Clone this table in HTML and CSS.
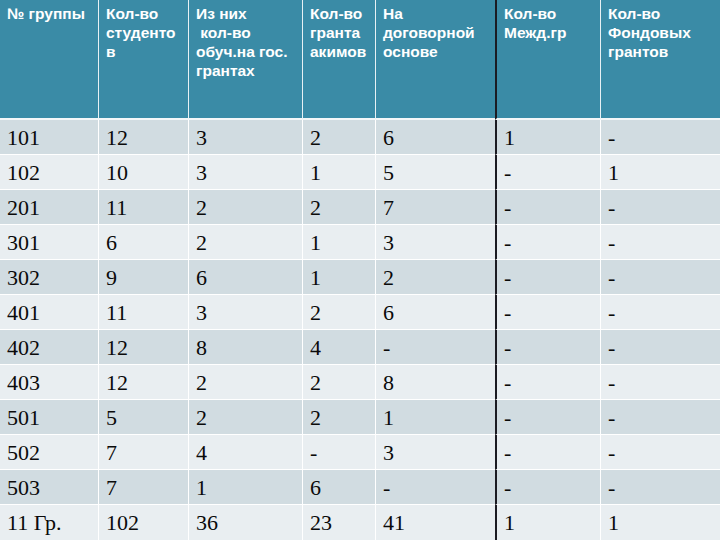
FILE: index.html
```html
<!DOCTYPE html>
<html lang="ru">
<head>
<meta charset="utf-8">
<link rel="stylesheet" href="styles.css">
</head>
<body>
<table class="grid">
  <colgroup>
    <col class="c1"><col class="c2"><col class="c3"><col class="c4"><col class="c5"><col class="c6"><col class="c7">
  </colgroup>
  <thead>
    <tr class="head">
      <th>№ группы</th>
      <th>Кол-во<br>студенто<br>в</th>
      <th>Из них<br>&nbsp;кол-во<br>обуч.на гос.<br>грантах</th>
      <th>Кол-во<br>гранта<br>акимов</th>
      <th>На<br>договорной<br>основе</th>
      <th class="dark">Кол-во<br>Межд.гр</th>
      <th>Кол-во<br>Фондовых<br>грантов</th>
    </tr>
  </thead>
  <tbody>
    <tr class="odd"><td>101</td><td>12</td><td>3</td><td>2</td><td>6</td><td class="dark">1</td><td>-</td></tr>
    <tr class="even"><td>102</td><td>10</td><td>3</td><td>1</td><td>5</td><td class="dark">-</td><td>1</td></tr>
    <tr class="odd"><td>201</td><td>11</td><td>2</td><td>2</td><td>7</td><td class="dark">-</td><td>-</td></tr>
    <tr class="even"><td>301</td><td>6</td><td>2</td><td>1</td><td>3</td><td class="dark">-</td><td>-</td></tr>
    <tr class="odd"><td>302</td><td>9</td><td>6</td><td>1</td><td>2</td><td class="dark">-</td><td>-</td></tr>
    <tr class="even"><td>401</td><td>11</td><td>3</td><td>2</td><td>6</td><td class="dark">-</td><td>-</td></tr>
    <tr class="odd"><td>402</td><td>12</td><td>8</td><td>4</td><td>-</td><td class="dark">-</td><td>-</td></tr>
    <tr class="even"><td>403</td><td>12</td><td>2</td><td>2</td><td>8</td><td class="dark">-</td><td>-</td></tr>
    <tr class="odd"><td>501</td><td>5</td><td>2</td><td>2</td><td>1</td><td class="dark">-</td><td>-</td></tr>
    <tr class="even"><td>502</td><td>7</td><td>4</td><td>-</td><td>3</td><td class="dark">-</td><td>-</td></tr>
    <tr class="odd"><td>503</td><td>7</td><td>1</td><td>6</td><td>-</td><td class="dark">-</td><td>-</td></tr>
    <tr class="even last"><td>11 Гр.</td><td>102</td><td>36</td><td>23</td><td>41</td><td class="dark">1</td><td>1</td></tr>
  </tbody>
</table>
</body>
</html>
```
FILE: styles.css
```css
html, body {
  margin: 0;
  padding: 0;
  background: #e9eef1;
}
.grid {
  width: 720px;
  table-layout: fixed;
  border-collapse: separate;
  border-spacing: 0;
}
.c1 { width: 98px; }
.c2 { width: 90px; }
.c3 { width: 114px; }
.c4 { width: 73px; }
.c5 { width: 120px; }
.c6 { width: 105px; }
.c7 { width: 120px; }

.grid th, .grid td {
  border-left: 1px solid #ffffff;
  padding: 0 0 0 7px;
  text-align: left;
  white-space: nowrap;
  overflow: hidden;
}
.grid th:first-child, .grid td:first-child {
  border-left: none;
}
.grid th.dark, .grid td.dark {
  border-left: 2px solid #1b1b22;
}

.head {
  height: 120px;
}
.head th {
  background: #3a8ba6;
  color: #ffffff;
  font-family: "Liberation Sans", Arial, sans-serif;
  font-weight: bold;
  font-size: 15.5px;
  line-height: 19px;
  vertical-align: top;
  padding-top: 4px;
  border-bottom: 2px solid #f4f7f8;
  border-left-color: #e8f1f4;
}

.grid tbody tr {
  height: 35px;
}
.grid td {
  font-family: "Liberation Serif", "Times New Roman", serif;
  font-size: 22px;
  color: #0a0a0a;
  vertical-align: middle;
  border-bottom: 1px solid #ffffff;
  padding-top: 1px;
}
.grid tr.last td {
  border-bottom: none;
}
.odd td {
  background: #d1dce1;
}
.even td {
  background: #e9eef1;
}
```
